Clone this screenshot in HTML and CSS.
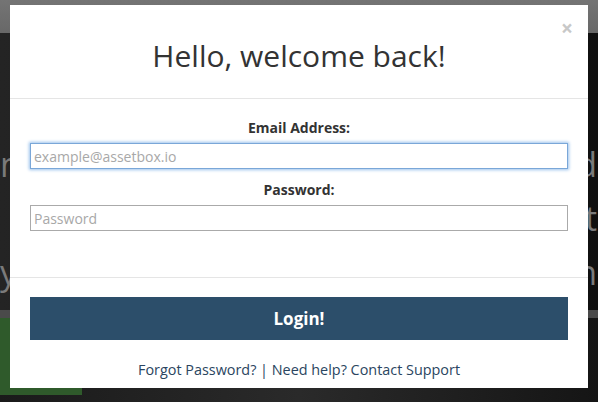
FILE: index.html
```html
<!DOCTYPE html>
<html lang="en">
<head>
<meta charset="utf-8">
<title>Login</title>
<link rel="stylesheet" href="styles.css">
</head>
<body>
<div class="page">
  <div class="topbar"></div>
  <div class="hero">
    <div class="hero-line"><span>n</span><span>d</span></div>
    <div class="hero-line"><span></span><span>t</span></div>
    <div class="hero-line"><span>y</span><span>n</span></div>
  </div>
  <div class="band"></div>
  <div class="lower">
    <div class="green"></div>
  </div>
</div>

<div class="modal">
  <div class="modal-header">
    <h1 class="modal-title">Hello, welcome back!</h1>
    <button class="close" type="button">×</button>
  </div>
  <form class="modal-body">
    <label class="field-label" for="email">Email Address:</label>
    <input class="field focused" id="email" type="email" placeholder="example@assetbox.io">
    <label class="field-label" for="password">Password:</label>
    <input class="field" id="password" type="password" placeholder="Password">
  </form>
  <div class="modal-footer">
    <button class="login" type="button">Login!</button>
    <p class="help"><a href="#">Forgot Password?</a> | <a href="#">Need help? Contact Support</a></p>
  </div>
</div>
</body>
</html>
```

FILE: styles.css
```css
* { box-sizing: border-box; }

html, body {
  margin: 0;
  height: 100%;
}

body {
  font-family: "Open Sans", "Liberation Sans", sans-serif;
  background: #141414;
  overflow: hidden;
}

.page {
  display: flex;
  flex-direction: column;
  height: 402px;
}

.topbar {
  height: 33px;
  background: linear-gradient(#747474, #686868);
}

.hero {
  height: 277px;
  background: linear-gradient(90deg, #242424 0%, #1c1c1c 50%, #101010 100%);
  padding-top: 104px;
  display: flex;
  flex-direction: column;
}

.hero-line {
  display: flex;
  justify-content: space-between;
  font-size: 34px;
  line-height: 54px;
  color: #7a7a7a;
  padding: 0 1px 0 0;
}

.band {
  height: 8px;
  background: #4a4a4a;
}

.lower {
  flex: 1;
  background: linear-gradient(90deg, #1a1a1a, #2a2a2a 50%, #151515);
}

.green {
  width: 82px;
  height: 77px;
  background: #2f5a2b;
}

.modal {
  position: absolute;
  left: 10px;
  top: 5px;
  width: 578px;
  height: 383px;
  background: #fff;
  display: flex;
  flex-direction: column;
}

.modal-header {
  position: relative;
  height: 94px;
  border-bottom: 1px solid #e5e5e5;
  padding-top: 31px;
}

.modal-title {
  margin: 0;
  font-weight: 400;
  font-size: 30px;
  line-height: 40px;
  color: #333;
  text-align: center;
}

.close {
  position: absolute;
  top: 13px;
  right: 15px;
  padding: 0;
  border: 0;
  background: none;
  font-family: "Open Sans", "Liberation Sans", sans-serif;
  font-size: 21px;
  font-weight: 700;
  line-height: 21px;
  color: #c8c8c8;
}

.modal-body {
  margin: 0;
  height: 178px;
  padding: 20px 20px 0;
  display: flex;
  flex-direction: column;
}

.field-label {
  font-size: 14px;
  font-weight: 700;
  color: #333;
  text-align: center;
  line-height: 18px;
  margin-bottom: 6px;
}

.field {
  width: 100%;
  height: 26px;
  border: 1px solid #aaa;
  border-radius: 0;
  padding: 0 3px;
  font-family: "Open Sans", "Liberation Sans", sans-serif;
  font-size: 14px;
  color: #333;
  margin-bottom: 12px;
  outline: none;
}

.field::placeholder {
  color: #a8a8a8;
}

.field.focused {
  border: 1px solid #7aa7d8;
  box-shadow: 0 0 3px 1px #9cc3ec;
}

.modal-footer {
  flex: 1;
  border-top: 1px solid #e5e5e5;
  padding: 19px 20px 0;
  display: flex;
  flex-direction: column;
}

.login {
  height: 43px;
  border: 0;
  background: #2c4e6a;
  color: #fff;
  font-family: "Open Sans", "Liberation Sans", sans-serif;
  font-size: 17px;
  font-weight: 700;
}

.help {
  margin: 20px 0 0;
  text-align: center;
  font-size: 14.4px;
  line-height: 20px;
  color: #2a4560;
}

.help a {
  color: #2a4560;
  text-decoration: none;
}
```
